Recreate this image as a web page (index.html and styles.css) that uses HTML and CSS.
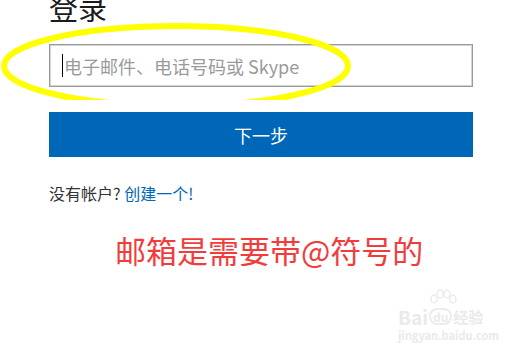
FILE: index.html
```html
<!DOCTYPE html>
<html lang="zh-CN">
<head>
  <meta charset="UTF-8">
  <title>登录</title>
  <link rel="stylesheet" href="styles.css">
</head>
<body>

  <div class="signin">
    <h1>登录</h1>

    <div class="field">
      <span class="caret"></span>
      <span class="placeholder">电子邮件、电话号码或 Skype</span>
    </div>

    <button class="next">下一步</button>

    <p class="create">没有帐户? <a href="#">创建一个!</a></p>
  </div>

  <p class="note">邮箱是需要带@符号的</p>

  <svg class="circle" width="360" height="100" viewBox="0 0 360 100">
    <ellipse cx="176" cy="66" rx="172" ry="40" fill="none" stroke="#ffff00" stroke-width="6"/>
  </svg>

  <div class="watermark">
    <svg class="paw" width="30" height="18" viewBox="0 0 30 18">
      <ellipse cx="6" cy="10" rx="3" ry="4" fill="none" stroke="#ececec" stroke-width="1.5"/>
      <ellipse cx="12" cy="5" rx="3" ry="4" fill="none" stroke="#ececec" stroke-width="1.5"/>
      <ellipse cx="19" cy="5" rx="3" ry="4" fill="none" stroke="#ececec" stroke-width="1.5"/>
      <ellipse cx="25" cy="10" rx="3" ry="4" fill="none" stroke="#ececec" stroke-width="1.5"/>
    </svg>
    <div class="brand"><span class="bai">Bai</span><span class="du">du</span><span class="jy">经验</span></div>
    <div class="site">jingyan.baidu.com</div>
  </div>

</body>
</html>
```

FILE: styles.css
```css
body {
  margin: 0;
  background: #fff;
  font-family: "Noto Sans CJK SC", "Noto Sans", sans-serif;
  overflow: hidden;
}

.signin {
  width: 424px;
  padding-left: 49px;
}

h1 {
  margin: -8px 0 0;
  font-size: 29px;
  line-height: 30px;
  font-weight: 400;
  color: #1b1b1b;
}

.field {
  display: flex;
  align-items: center;
  margin-top: 22px;
  height: 43px;
  box-sizing: border-box;
  border: 1px solid #999;
  box-shadow: inset 0 0 0 1px #d4d4d4;
  padding-left: 12px;
}

.caret {
  width: 1px;
  height: 23px;
  background: #000;
}

.placeholder {
  font-size: 18px;
  color: #9a9a9a;
  margin-left: 1px;
}

.next {
  display: block;
  width: 100%;
  height: 45px;
  margin-top: 25px;
  border: none;
  background: #0067b8;
  color: #fff;
  font-family: inherit;
  font-size: 18px;
}

.create {
  margin: 26px 0 0;
  font-size: 16px;
  line-height: 20px;
  color: #333;
}

.create a {
  color: #0067b8;
  text-decoration: none;
}

.note {
  margin: 29px 0 0 115px;
  font-size: 31px;
  line-height: 36px;
  color: #f23c3c;
}

.circle {
  position: absolute;
  left: 0;
  top: 0;
}

.watermark {
  position: absolute;
  left: 398px;
  top: 289px;
  color: #eaeaea;
}

.paw {
  display: block;
  margin-left: 30px;
}

.brand {
  display: flex;
  align-items: center;
  height: 18px;
  font-weight: 700;
  font-size: 19px;
}

.du {
  font-size: 12px;
  border: 2px solid #ececec;
  border-radius: 8px;
  padding: 0 2px;
  line-height: 13px;
  margin: 0 1px;
}

.jy {
  font-size: 15px;
}

.site {
  font-size: 11px;
  font-weight: 700;
  margin-top: 2px;
}
```
